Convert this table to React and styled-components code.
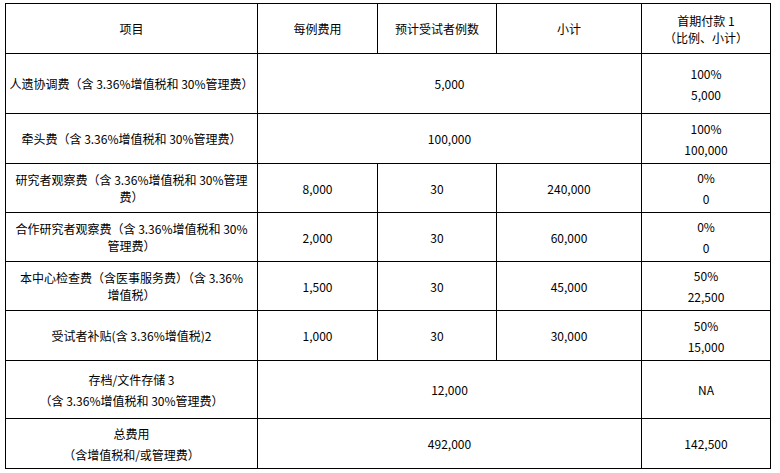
import React from 'react'
import styled, { createGlobalStyle } from 'styled-components'

const GlobalStyle = createGlobalStyle`
    html, body {
        margin:0;
        padding:0;
        background:#fff;
    }
    body{
        font-family: "Noto Sans CJK SC", "Noto Sans", sans-serif;
        font-size:12px;
        color:#000;
    }
`;

const rows = [
    { h: 60, item: ['人遗协调费（含 3.36%增值税和 30%管理费）'], merged: '5,000', pay: ['100%', '5,000'] },
    { h: 50, item: ['牵头费（含 3.36%增值税和 30%管理费）'], merged: '100,000', pay: ['100%', '100,000'] },
    { h: 49, item: ['研究者观察费（含 3.36%增值税和 30%管理', '费）'], tight: true, cost: '8,000', count: '30', sub: '240,000', pay: ['0%', '0'] },
    { h: 49, item: ['合作研究者观察费（含 3.36%增值税和 30%', '管理费）'], tight: true, cost: '2,000', count: '30', sub: '60,000', pay: ['0%', '0'] },
    { h: 49, item: ['本中心检查费（含医事服务费）（含 3.36%', '增值税）'], tight: true, cost: '1,500', count: '30', sub: '45,000', pay: ['50%', '22,500'] },
    { h: 50, item: ['受试者补贴(含 3.36%增值税)2'], cost: '1,000', count: '30', sub: '30,000', pay: ['50%', '15,000'] },
    { h: 58, item: ['存档/文件存储 3', '（含 3.36%增值税和 30%管理费）'], merged: '12,000', pay: ['NA'] },
    { h: 50, item: ['总费用', '（含增值税和/或管理费）'], merged: '492,000', pay: ['142,500'] },
]

function Lines({ lines, tight }) {
    return (
        <Stack $gap={tight ? 0 : 4}>
            {lines.map((l, i) => <Line key={i}>{l}</Line>)}
        </Stack>
    )
}

function App() {
    return (
        <>
            <GlobalStyle />
            <Page>
                <FeeTable>
                    <colgroup>
                        <col style={{ width: 252 }} />
                        <col style={{ width: 120 }} />
                        <col style={{ width: 119 }} />
                        <col style={{ width: 145 }} />
                        <col style={{ width: 129 }} />
                    </colgroup>
                    <thead>
                        <Row $h={50}>
                            <Cell>项目</Cell>
                            <Cell>每例费用</Cell>
                            <Cell>预计受试者例数</Cell>
                            <Cell>小计</Cell>
                            <Cell>
                                <Stack $gap={0}>
                                    <Line>首期付款 1</Line>
                                    <Line>（比例、小计）</Line>
                                </Stack>
                            </Cell>
                        </Row>
                    </thead>
                    <tbody>
                        {rows.map((r, i) => (
                            <Row key={i} $h={r.h}>
                                <Cell><Lines lines={r.item} tight={r.tight} /></Cell>
                                {r.merged ? (
                                    <Cell colSpan={3}>{r.merged}</Cell>
                                ) : (
                                    <>
                                        <Cell>{r.cost}</Cell>
                                        <Cell>{r.count}</Cell>
                                        <Cell>{r.sub}</Cell>
                                    </>
                                )}
                                <Cell><Lines lines={r.pay} /></Cell>
                            </Row>
                        ))}
                    </tbody>
                </FeeTable>
            </Page>
        </>
    )
}

export default App

const Page = styled.div`
    padding:3px 0 0 5px;
    width:780px;
    height:473px;
    box-sizing:border-box;
`;

const FeeTable = styled.table`
    border-collapse:collapse;
    table-layout:fixed;
    width:766px;
`;

const Row = styled.tr`
    height:${p => p.$h}px;
`;

const Cell = styled.td`
    border:1px solid #000;
    padding:0 8px;
    text-align:center;
    vertical-align:middle;
    line-height:17px;
    white-space:nowrap;
`;

const Stack = styled.div`
    display:flex;
    flex-direction:column;
    align-items:center;
    gap:${p => p.$gap}px;
`;

const Line = styled.div`
    line-height:17px;
`;
